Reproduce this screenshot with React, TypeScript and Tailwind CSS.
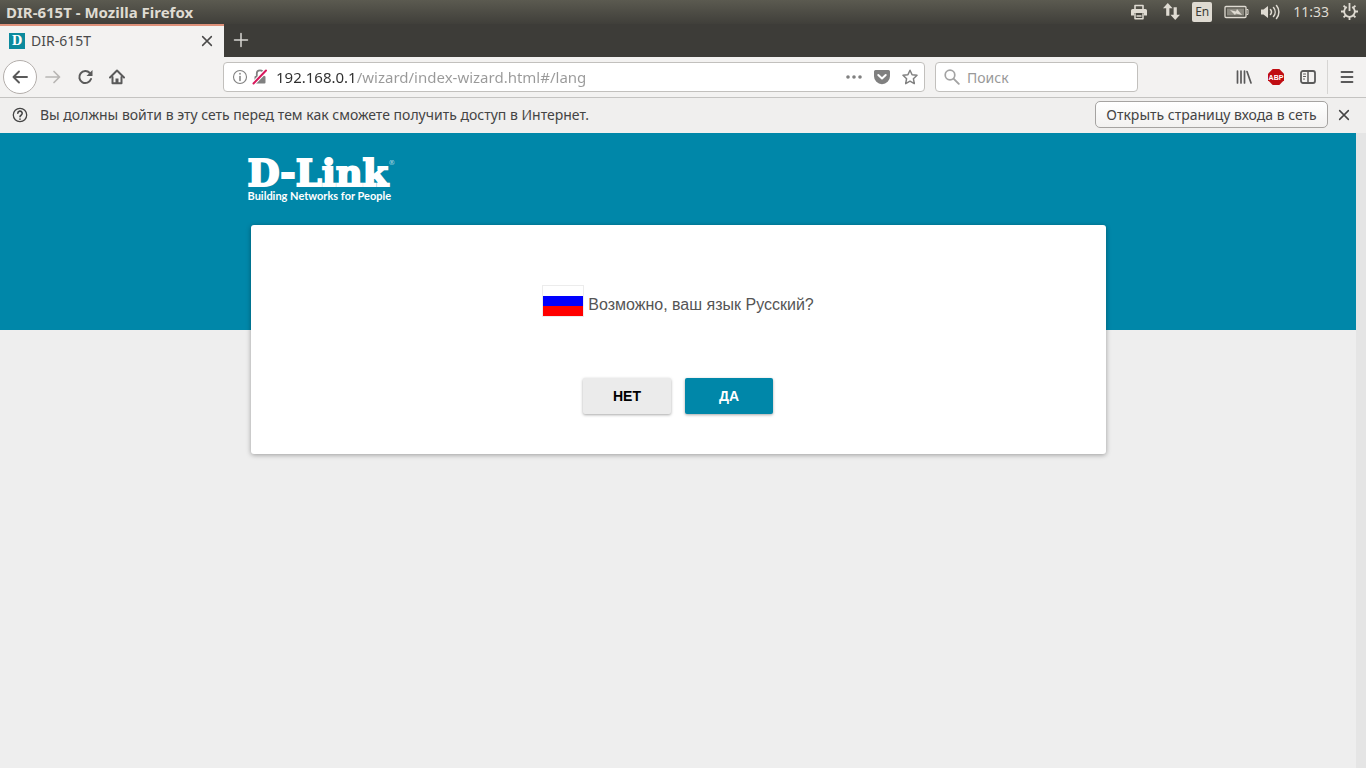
import type { ReactNode } from 'react';

type IconProps = {
  className?: string;
  size?: number;
  children: ReactNode;
};

const Icon = ({ className = '', size = 16, children }: IconProps) => (
  <svg
    className={`shrink-0 ${className}`}
    width={size}
    height={size}
    viewBox="0 0 16 16"
    fill="none"
    stroke="currentColor"
    strokeWidth="2"
    strokeLinecap="round"
    strokeLinejoin="round"
    aria-hidden="true"
  >
    {children}
  </svg>
);

const CloseIcon = () => (
  <Icon size={14}>
    <path d="M3 3l10 10M13 3L3 13" strokeWidth="1.7" />
  </Icon>
);

const SystemTray = () => (
  <div className="flex items-center text-[#dfdbd2]">
    {/* printer */}
    <Icon>
      <path d="M4 5V1.500h8V5" strokeWidth="1.600" />
      <path
        d="M1.500 5h13A1.500 1.500 0 0 1 16 6.500v5h-3V9H3v2.500H0v-5A1.500 1.500 0 0 1 1.500 5z"
        fill="currentColor"
        stroke="none"
      />
      <path d="M4 9.800v5h8v-5M6 12h4" strokeWidth="1.500" />
    </Icon>
    {/* network traffic */}
    <Icon className="ml-4" size={17}>
      <path
        d="M4.500 0L9 5H6v7H3V5H0zM11.500 16L16 11h-3V4h-3v7H7z"
        fill="currentColor"
        stroke="none"
      />
    </Icon>
    <span className="ml-3 flex h-5 w-5 items-center justify-center rounded-xs bg-[#dfdbd2] text-xs text-[#3c3b37]">
      En
    </span>
    {/* battery */}
    <svg className="ml-3 shrink-0" width="25" height="14" viewBox="0 0 25 14" aria-hidden="true">
      <rect x="1" y="1.500" width="21" height="11" rx="1" fill="none" stroke="currentColor" strokeWidth="1.300" />
      <path d="M22.500 4.500H24v5h-1.500" fill="none" stroke="currentColor" />
      <rect x="3" y="3.500" width="17" height="7" fill="#8b8980" />
      <path d="M6 5l6 1.500 1-2.500 5 6-6-1.500L11 10z" fill="currentColor" />
    </svg>
    {/* volume */}
    <svg className="ml-3 shrink-0" width="20" height="16" viewBox="0 0 20 16" aria-hidden="true">
      <path d="M0 5.500h2.500L7 2v12l-4.500-3.500H0z" fill="currentColor" />
      <path
        d="M9.500 5.500a4 4 0 0 1 0 5M12.500 3.500a7 7 0 0 1 0 9M15.500 1.500a10 10 0 0 1 0 13"
        fill="none"
        stroke="currentColor"
        strokeWidth="1.500"
        strokeLinecap="round"
      />
    </svg>
    <time className="ml-3 text-sm">11:33</time>
    {/* session */}
    <svg className="ml-3 shrink-0" width="17" height="17" viewBox="0 0 16 16" fill="none" stroke="currentColor" aria-hidden="true">
      <path d="M5.500 3.700a5 5 0 1 0 5 0" strokeWidth="1.700" />
      <path
        d="M8 0v7.500M0 8h3M13 8h3M2.400 2.400l2 2M13.600 2.400l-2 2M2.400 13.600l2-2M13.600 13.600l-2-2M8 13v3"
        strokeWidth="1.700"
      />
    </svg>
  </div>
);

const TitleBar = () => (
  <div className="flex h-6 items-center justify-between bg-linear-to-b from-[#5b5a50] to-[#403f3a] pr-2 pb-px pl-[6px]">
    <h1 className="text-[15px] leading-5 font-bold text-[#dfdbd2]">DIR-615T - Mozilla Firefox</h1>
    <SystemTray />
  </div>
);

const TabStrip = () => (
  <div className="flex h-[33px] bg-[#3d3c38]">
    <div className="flex w-56 items-center border-t-2 border-[#dd9079] bg-[#f3f2f1] pr-2.5 pb-0.5 pl-[9px] text-[#4a4a4a]">
      <span className="flex h-4 w-4 items-center justify-center bg-[#0c8a9d] font-['DejaVu_Serif',serif] text-xs font-bold text-white">
        D
      </span>
      <span className="ml-1.5 grow text-sm">DIR-615T</span>
      <button type="button" aria-label="Закрыть вкладку">
        <CloseIcon />
      </button>
    </div>
    <button type="button" aria-label="Новая вкладка" className="px-[9px] pb-0.5 text-[#d8d6d2]">
      <Icon>
        <path d="M8 1.500v13M1.500 8h13" strokeWidth="1.500" />
      </Icon>
    </button>
  </div>
);

const AddressBar = () => (
  <div className="flex h-[30px] grow items-center rounded-sm border border-[#c2c0bd] bg-white pr-1.5 pl-2 text-[#808080]">
    <Icon>
      <circle cx="8" cy="8" r="6.500" strokeWidth="1.100" />
      <path d="M8 7.500v4" strokeWidth="1.500" />
      <path d="M8 4.700v.1" strokeWidth="1.700" />
    </Icon>
    <Icon className="ml-1">
      <path d="M4.800 7V4.500a3.200 3.200 0 0 1 6.400 0V7" strokeWidth="1.800" />
      <rect x="2.500" y="7" width="11" height="7.500" rx="1" fill="currentColor" stroke="none" />
      <path d="M1.500 14.500L14 1.500" stroke="#fff" strokeWidth="4" />
      <path d="M1.500 14.500L14 1.500" stroke="#d7185c" strokeWidth="2" />
    </Icon>
    {/* the host part of the address is darker than the path */}
    <input
      type="text"
      aria-label="Адрес"
      defaultValue="192.168.0.1/wizard/index-wizard.html#/lang"
      className="ml-2 h-full min-w-0 grow bg-[linear-gradient(to_right,#2e2e2e_81px,#999_81px)] bg-clip-text text-[15px] text-transparent outline-none"
    />
    <div className="flex gap-3">
      <button type="button" aria-label="Действия на странице">
        <Icon>
          <path d="M2 8h.01M8 8h.01M14 8h.01" strokeWidth="3.600" />
        </Icon>
      </button>
      <button type="button" aria-label="Сохранить в Pocket">
        <Icon>
          <path
            d="M1.500 1h13A1.500 1.500 0 0 1 16 2.500v4.700a8 8 0 0 1-16 0V2.500A1.500 1.500 0 0 1 1.500 1z"
            fill="currentColor"
            stroke="none"
          />
          <path d="M4.300 6L8 9.500 11.700 6" stroke="#fff" />
        </Icon>
      </button>
      <button type="button" aria-label="Добавить в закладки">
        <Icon>
          <path
            d="M8 1.200l2.100 4.500 4.900.6-3.600 3.400.9 4.900L8 12.200l-4.300 2.400.9-4.900L1 6.300l4.900-.6z"
            strokeWidth="1.500"
          />
        </Icon>
      </button>
    </div>
  </div>
);

const SearchBar = () => (
  <div className="flex h-[30px] w-[203px] items-center rounded-sm border border-[#c2c0bd] bg-white px-2 text-[#a3a3a3]">
    <Icon>
      <circle cx="6" cy="6" r="4.800" strokeWidth="1.700" />
      <path d="M9.800 9.800l5 5" strokeWidth="1.900" />
    </Icon>
    <input
      type="text"
      aria-label="Поиск"
      placeholder="Поиск"
      className="ml-[7px] h-full min-w-0 grow text-sm outline-none placeholder:text-[#999]"
    />
  </div>
);

const Toolbar = () => (
  <div className="flex h-[41px] items-center border-b border-[#c4c3c1] bg-[#f3f2f1] pl-[3px] text-[#5a5a5a]">
    <button
      type="button"
      aria-label="Назад"
      className="flex h-[34px] w-[34px] items-center justify-center rounded-full border border-[#b3aeab] bg-white"
    >
      <Icon>
        <path d="M15 8H1.500M7 2.500L1.500 8 7 13.500" strokeWidth="1.900" />
      </Icon>
    </button>
    <div className="ml-2 flex gap-4">
      <button type="button" aria-label="Вперёд" className="text-[#b8b6b4]">
        <Icon>
          <path d="M1 8h13.500M9 2.500L14.500 8 9 13.500" strokeWidth="1.700" />
        </Icon>
      </button>
      <button type="button" aria-label="Обновить">
        <Icon>
          <path d="M12.800 4A6 6 0 1 0 14 10" />
          <path d="M15.500 1v6h-6z" fill="currentColor" stroke="none" />
        </Icon>
      </button>
      <button type="button" aria-label="Домой">
        <Icon>
          <path d="M1 8.500L8 1.500l7 7" />
          <path d="M3.500 8v6.200h9V8" />
          <path d="M6.500 14V9.500h3V14z" fill="currentColor" stroke="none" />
        </Icon>
      </button>
    </div>
    <div className="ml-[98px] flex grow gap-2.5">
      <AddressBar />
      <SearchBar />
    </div>
    <div className="ml-[98px] flex gap-4">
      <button type="button" aria-label="Библиотека">
        <Icon>
          <path d="M1.500 2v12M5 2v12M8.500 2v12M11 2.500L15 14" strokeWidth="1.700" />
        </Icon>
      </button>
      <button type="button" aria-label="Adblock Plus">
        <svg width="16" height="16" viewBox="0 0 16 16" aria-hidden="true">
          <path d="M4.700 0h6.600L16 4.700v6.600L11.300 16H4.700L0 11.300V4.700z" fill="#c00d12" />
          <text
            x="8"
            y="10.500"
            textAnchor="middle"
            className="fill-white font-['Liberation_Sans',sans-serif] text-[7px] font-bold"
          >
            ABP
          </text>
        </svg>
      </button>
      <button type="button" aria-label="Боковая панель">
        <Icon>
          <rect x="1" y="2" width="14" height="12" rx="2" strokeWidth="1.800" />
          <path d="M8 2v12" strokeWidth="1.500" />
          <path d="M3.500 5h2M3.500 7.500h2M3.500 10h1" strokeWidth="1.100" />
        </Icon>
      </button>
    </div>
    <div className="ml-[11px] flex h-[34px] items-center border-l border-[#d6d5d3] px-[11px]">
      <button type="button" aria-label="Меню">
        <Icon>
          <path d="M2.500 3h11M2.500 8h11M2.500 13h11" strokeWidth="1.800" />
        </Icon>
      </button>
    </div>
  </div>
);

const NetworkNotice = () => (
  <div className="flex h-[35px] items-center bg-[#f0efee] pr-[15px] pb-0.5 pl-3 text-[#444]">
    <Icon>
      <circle cx="8" cy="8" r="6.700" strokeWidth="1.300" />
      <path d="M5.800 6.300a2.200 2.200 0 1 1 3.300 1.900C8.300 8.700 8 9 8 9.700" strokeWidth="1.600" />
      <path d="M8 12v.1" strokeWidth="1.700" />
    </Icon>
    <p className="ml-3 grow text-sm">
      Вы должны войти в эту сеть перед тем как сможете получить доступ в Интернет.
    </p>
    <button
      type="button"
      className="mr-[9px] h-[27px] w-[233px] rounded-[5px] border border-[#a5a3a1] bg-linear-to-b from-white to-[#f2f1f0] text-sm whitespace-nowrap"
    >
      Открыть страницу входа в сеть
    </button>
    <button type="button" aria-label="Закрыть уведомление">
      <CloseIcon />
    </button>
  </div>
);

const Logo = () => (
  <div className="-ml-[3px] w-fit text-white">
    <div className="flex font-['DejaVu_Serif',serif] text-[37px] leading-8 font-bold">
      <span className="[-webkit-text-stroke:2px_white]">D-Link</span>
      <span className="text-[7px] leading-3 font-normal text-white/70">®</span>
    </div>
    <p className="font-['Lato',sans-serif] text-[11px] leading-[14px] font-bold whitespace-nowrap">
      Building Networks for People
    </p>
  </div>
);

const Flag = () => (
  <svg width="42" height="32" viewBox="0 0 42 32" role="img" aria-label="Россия">
    <rect x=".5" y=".5" width="41" height="31" fill="#fff" stroke="#ececec" />
    <path d="M1 11h40v10H1z" fill="#00f" />
    <path d="M1 21h40v10H1z" fill="#f00" />
  </svg>
);

const buttonClass =
  'h-9 w-[88px] rounded-xs text-sm font-bold shadow-[0_1px_3px_rgba(0,0,0,0.35)]';

const LanguageCard = () => (
  <section className="rounded-[3px] bg-white pt-[60px] pb-10 text-center shadow-[0_1px_5px_rgba(0,0,0,0.35)]">
    <div className="flex items-center justify-center gap-1">
      <Flag />
      <p className="pt-2 text-base text-[#555]">Возможно, ваш язык Русский?</p>
    </div>
    <div className="mt-[61px] flex justify-center gap-3.5">
      <button type="button" className={`${buttonClass} bg-[#ebebeb] text-black`}>
        НЕТ
      </button>
      <button type="button" className={`${buttonClass} bg-[#0087a9] text-white`}>
        ДА
      </button>
    </div>
  </section>
);

const App = () => {
  return (
    <div className="flex min-h-screen flex-col font-['Noto_Sans',sans-serif]">
      <header>
        <TitleBar />
        <TabStrip />
        <Toolbar />
        <NetworkNotice />
      </header>
      <main className="grow border-r-10 border-[#e5e5e5] bg-[#eee] font-['Liberation_Sans',sans-serif]">
        <div className="h-[197px] bg-[#0087a9] pt-6">
          <div className="mx-auto max-w-[855px]">
            <Logo />
          </div>
        </div>
        <div className="mx-auto -mt-[105px] max-w-[855px]">
          <LanguageCard />
        </div>
      </main>
    </div>
  );
};

export default App;
